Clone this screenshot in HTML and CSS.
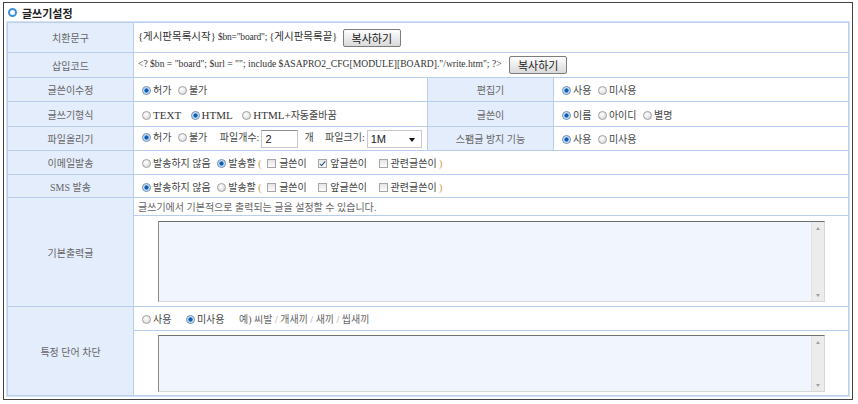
FILE: index.html
```html
<!DOCTYPE html>
<html lang="ko">
<head>
    <meta charset="UTF-8">
    <title>글쓰기설정</title>
    <link rel="stylesheet" href="styles.css">
</head>
<body>
<div class="setting-box">
    <h2 class="box-title"><span class="title-dot"></span>글쓰기설정</h2>
    <table class="form-table">
        <colgroup>
            <col class="col-label"><col class="col-value"><col class="col-label"><col>
        </colgroup>
        <tr class="row-copy">
            <th>치환문구</th>
            <td colspan="3" class="code">
                <span class="ko">{게시판목록시작}</span> $bn="board"; <span class="ko">{게시판목록끝}</span>
                <button class="copy-btn">복사하기</button>
            </td>
        </tr>
        <tr class="row-25">
            <th>삽입코드</th>
            <td colspan="3" class="code small">
                &lt;? $bn = "board"; $url = ""; include $ASAPRO2_CFG[MODULE][BOARD]."/write.htm"; ?&gt;
                <button class="copy-btn">복사하기</button>
            </td>
        </tr>
        <tr class="row-24">
            <th>글쓴이수정</th>
            <td>
                <label class="opt"><span class="radio on"></span>허가</label>
                <label class="opt"><span class="radio"></span>불가</label>
            </td>
            <th>편집기</th>
            <td>
                <label class="opt"><span class="radio on"></span>사용</label>
                <label class="opt"><span class="radio"></span>미사용</label>
            </td>
        </tr>
        <tr class="row-25">
            <th>글쓰기형식</th>
            <td class="format">
                <label class="opt"><span class="radio"></span><span class="en">TEXT</span></label>
                <label class="opt"><span class="radio on"></span><span class="en">HTML</span></label>
                <label class="opt"><span class="radio"></span><span class="en">HTML+</span>자동줄바꿈</label>
            </td>
            <th>글쓴이</th>
            <td>
                <label class="opt"><span class="radio on"></span>이름</label>
                <label class="opt"><span class="radio"></span>아이디</label>
                <label class="opt"><span class="radio"></span>별명</label>
            </td>
        </tr>
        <tr class="row-24">
            <th>파일올리기</th>
            <td>
                <label class="opt"><span class="radio on"></span>허가</label>
                <label class="opt"><span class="radio"></span>불가</label>
                <span class="field-name">파일개수:</span><span class="num-input">2</span><span class="unit">개</span>
                <span class="field-name">파일크기:</span><span class="select-box">1M<span class="caret"></span></span>
            </td>
            <th>스팸글 방지 기능</th>
            <td>
                <label class="opt"><span class="radio on"></span>사용</label>
                <label class="opt"><span class="radio"></span>미사용</label>
            </td>
        </tr>
        <tr class="row-24">
            <th>이메일발송</th>
            <td colspan="3">
                <label class="opt"><span class="radio"></span>발송하지 않음</label>
                <label class="opt"><span class="radio on"></span>발송할</label>
                <span class="paren">(</span>
                <label class="chk-opt"><span class="check"></span>글쓴이</label>
                <label class="chk-opt"><span class="check on"></span>앞글쓴이</label>
                <label class="chk-opt"><span class="check"></span>관련글쓴이</label>
                <span class="paren">)</span>
            </td>
        </tr>
        <tr class="row-23">
            <th>SMS 발송</th>
            <td colspan="3">
                <label class="opt"><span class="radio on"></span>발송하지 않음</label>
                <label class="opt"><span class="radio"></span>발송할</label>
                <span class="paren">(</span>
                <label class="chk-opt"><span class="check"></span>글쓴이</label>
                <label class="chk-opt"><span class="check"></span>앞글쓴이</label>
                <label class="chk-opt"><span class="check"></span>관련글쓴이</label>
                <span class="paren">)</span>
            </td>
        </tr>
        <tr class="row-note">
            <th rowspan="2">기본출력글</th>
            <td colspan="3" class="note">글쓰기에서 기본적으로 출력되는 글을 설정할 수 있습니다.</td>
        </tr>
        <tr class="row-editor">
            <td colspan="3" class="area-cell">
                <div class="textbox tall">
                    <div class="textbox-area"></div>
                    <div class="scrollbar"><span class="arrow up"></span><span class="arrow down"></span></div>
                </div>
            </td>
        </tr>
        <tr class="row-24">
            <th rowspan="2">특정 단어 차단</th>
            <td colspan="3">
                <label class="opt"><span class="radio"></span>사용</label>
                <label class="opt wide"><span class="radio on"></span>미사용</label>
                <span class="example">예) 씨발 <i>/</i> 개새끼 <i>/</i> 새끼 <i>/</i> 씹새끼</span>
            </td>
        </tr>
        <tr class="row-filter">
            <td colspan="3" class="area-cell">
                <div class="textbox short">
                    <div class="textbox-area"></div>
                    <div class="scrollbar"><span class="arrow up"></span><span class="arrow down"></span></div>
                </div>
            </td>
        </tr>
    </table>
</div>
</body>
</html>
```

FILE: styles.css
```css
body {
    margin: 0;
    font-family: "Liberation Serif", "Noto Sans CJK KR", serif;
    font-size: 10px;
    color: #444;
    background: #fff;
}

.setting-box {
    width: 842px;
    margin: 2px 0 0 3px;
    padding: 0 3px 3px;
    border: 1px solid #444;
}

.box-title {
    display: flex;
    align-items: center;
    height: 19px;
    margin: 0;
    font: bold 11px "Noto Sans CJK KR", sans-serif;
    color: #222;
}

.title-dot {
    width: 5px;
    height: 5px;
    margin: 0 5px 0 1px;
    border: 2px solid #3d8fdc;
    border-radius: 50%;
}

/* form table */
.form-table {
    width: 842px;
    border-collapse: collapse;
    table-layout: fixed;
    border: 1px solid #b7cbeb;
    box-shadow: 0 0 0 1px #d6e3f7;
}

.col-label {
    width: 126px;
}

.col-value {
    width: 294px;
}

.form-table th,
.form-table td {
    border: 1px solid #b9cdec;
    padding: 0 4px;
    white-space: nowrap;
    vertical-align: middle;
}

.form-table th {
    background: #e4edfc;
    color: #666;
    font-weight: normal;
    text-align: center;
}

.row-copy { height: 30px; }
.row-25 { height: 25px; }
.row-24 { height: 24px; }
.row-23 { height: 23px; }
.row-note { height: 18px; }
.row-editor { height: 91px; }
.row-filter { height: 65px; }

/* code rows */
.code {
    font-size: 9.5px;
    letter-spacing: -0.2px;
    color: #333;
}

.code .ko {
    font-size: 10.5px;
    letter-spacing: 0;
}

.code.small {
    font-size: 9.6px;
    letter-spacing: 0;
}

.copy-btn {
    height: 18px;
    margin-left: 3px;
    padding: 0 8px;
    border: 1px solid #7d7d7d;
    border-radius: 2px;
    background: linear-gradient(#fefefe, #d9d9d9);
    font: 11px/14px "Noto Sans CJK KR", sans-serif;
    letter-spacing: 0;
    color: #222;
    vertical-align: middle;
}

.code.small .copy-btn {
    margin-left: 5px;
}

/* radio & checkbox */
.opt,
.chk-opt {
    color: #444;
}

.radio,
.check {
    display: inline-block;
    width: 9px;
    height: 9px;
    box-sizing: border-box;
    vertical-align: -1px;
    position: relative;
}

.radio {
    margin: 0 2px 0 4px;
    border: 1px solid #a3a3a3;
    border-radius: 50%;
    background: radial-gradient(circle at 40% 35%, #fff, #d2d2d2);
}

.radio.on {
    border-color: #6d8db3;
    background: radial-gradient(circle, #0d5fb8 0 1.8px, #9fc3e8 2.3px, #e9eef5 3.5px);
}

.check {
    margin: 0 3px 0 9px;
    border: 1px solid #a6a6a6;
    background: linear-gradient(#e6e6e6, #fbfbfb);
}

.paren + .chk-opt .check {
    margin-left: 3px;
}

.check.on::after {
    content: "";
    position: absolute;
    left: 2px;
    top: 0;
    width: 2px;
    height: 5px;
    border: solid #2b4f8f;
    border-width: 0 1.5px 1.5px 0;
    transform: rotate(40deg);
}

.paren {
    color: #c8953a;
}

.format .opt + .opt .radio {
    margin-left: 7px;
}

.en {
    font-size: 11px;
    color: #333;
}

/* file upload fields */
.field-name {
    margin-left: 10px;
    color: #444;
}

.num-input {
    display: inline-block;
    width: 37px;
    height: 18px;
    margin-left: 2px;
    padding: 0 3px;
    box-sizing: border-box;
    border: 1px solid #c9c9c9;
    border-top-color: #8e8e8e;
    font: 11px/17px "Liberation Sans", sans-serif;
    color: #222;
    vertical-align: middle;
}

.unit {
    margin-left: 6px;
}

.unit + .field-name {
    margin-left: 9px;
}

.select-box {
    display: inline-block;
    position: relative;
    width: 55px;
    height: 18px;
    margin-left: 2px;
    padding: 0 3px;
    box-sizing: border-box;
    border: 1px solid #c9c9c9;
    font: 11px/16px "Liberation Sans", sans-serif;
    color: #222;
    vertical-align: middle;
}

.caret {
    position: absolute;
    right: 6px;
    top: 7px;
    border: 3.5px solid transparent;
    border-top: 4px solid #111;
    border-bottom: 0;
}

/* notes */
.note {
    color: #666;
}

.wide .radio {
    margin-left: 12px;
}

.example {
    margin-left: 12px;
    color: #666;
}

.example i {
    font-style: normal;
    color: #999;
}

/* textareas */
.form-table .area-cell {
    padding: 0 24px;
}

.textbox {
    display: flex;
    width: 667px;
    box-sizing: border-box;
    border: 1px solid #d8d8d8;
    border-top-color: #6f6f6f;
    border-left-color: #8a8a8a;
    background: #f1f6fe;
}

.textbox.tall {
    height: 81px;
}

.textbox.short {
    height: 57px;
}

.textbox-area {
    flex: 1;
}

.scrollbar {
    display: flex;
    flex-direction: column;
    justify-content: space-between;
    align-items: center;
    width: 12px;
    padding: 5px 0 4px;
    background: #ececec;
    border-left: 1px solid #e2e2e2;
}

.arrow {
    border: 2.5px solid transparent;
}

.arrow.up {
    border-bottom: 3px solid #a0a0a0;
    border-top: 0;
}

.arrow.down {
    border-top: 3px solid #a0a0a0;
    border-bottom: 0;
}
```
